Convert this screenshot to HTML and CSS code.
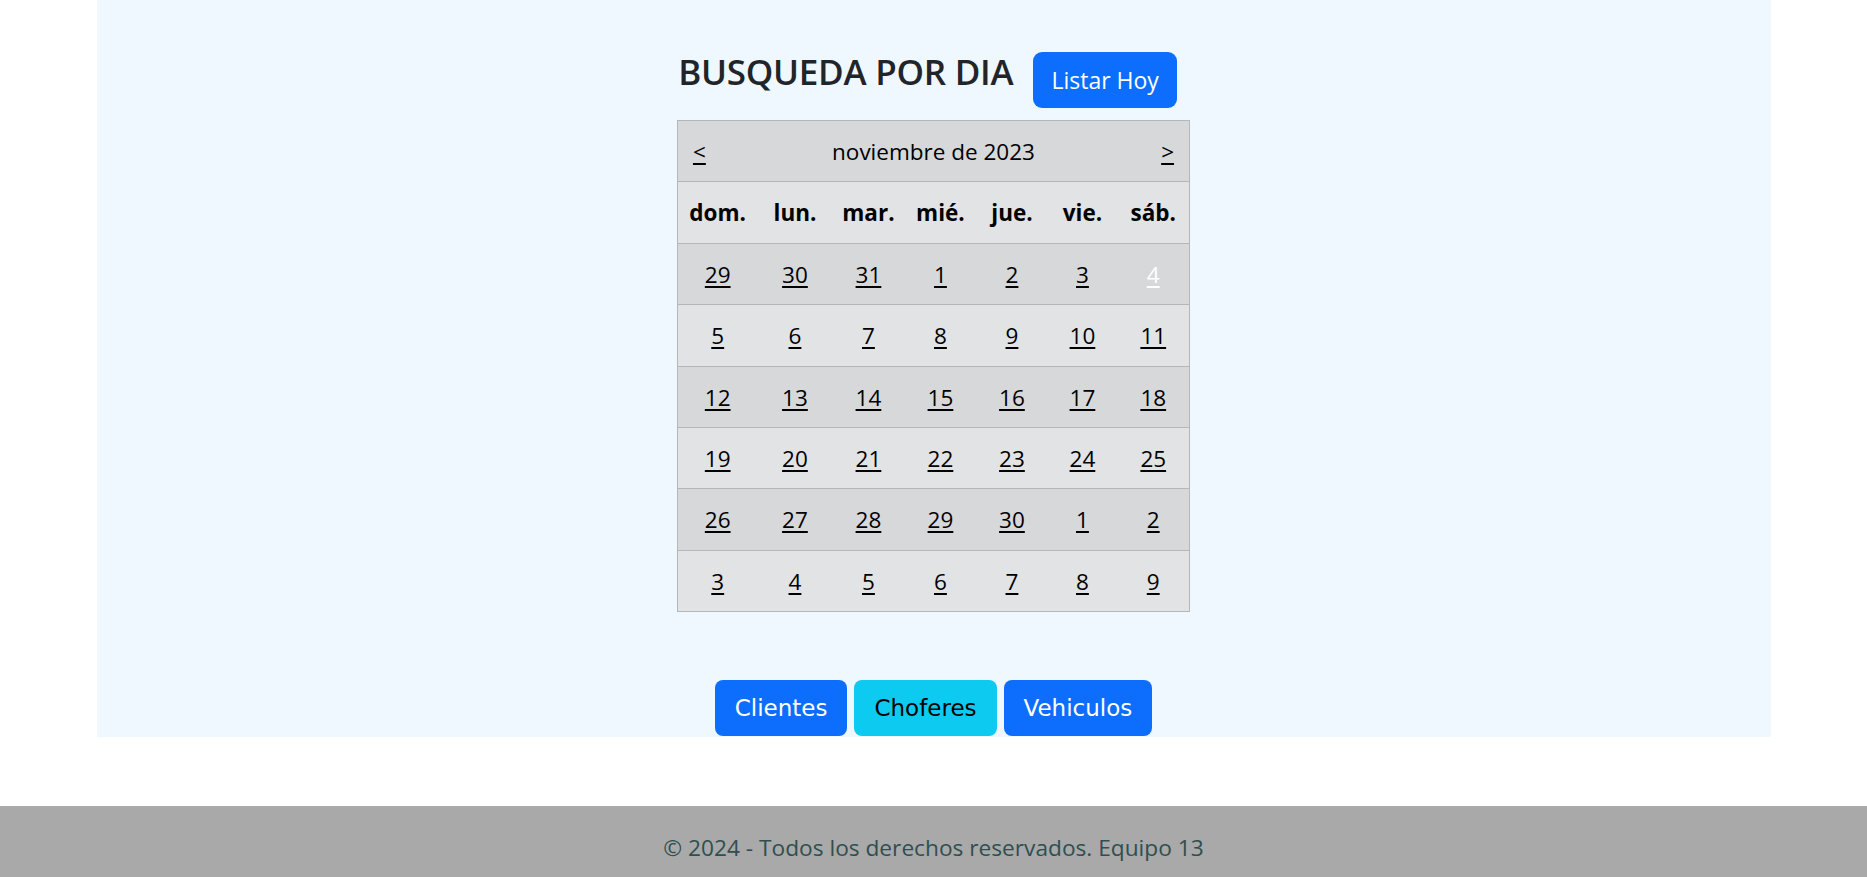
FILE: index.html
```html
<!DOCTYPE html>
<html lang="es">
<head>
<meta charset="utf-8">
<title>Busqueda por dia</title>
<link rel="stylesheet" href="styles.css">
</head>
<body>
<main class="container">
  <div class="title-row">
    <h2 class="title">BUSQUEDA POR DIA</h2>
    <a class="btn btn-lg btn-primary" href="#">Listar Hoy</a>
  </div>
  <table class="calendar">
    <colgroup>
      <col class="c1"><col class="c2"><col class="c3"><col class="c4"><col class="c5"><col class="c6"><col class="c7">
    </colgroup>
    <tr class="month-row">
      <td colspan="7">
        <div class="month-bar">
          <a href="#">&lt;</a>
          <span>noviembre de 2023</span>
          <a href="#">&gt;</a>
        </div>
      </td>
    </tr>
    <tr class="names">
      <th>dom.</th><th>lun.</th><th>mar.</th><th>mié.</th><th>jue.</th><th>vie.</th><th>sáb.</th>
    </tr>
    <tr><td><a href="#">29</a></td><td><a href="#">30</a></td><td><a href="#">31</a></td><td><a href="#">1</a></td><td><a href="#">2</a></td><td><a href="#">3</a></td><td><a class="today" href="#">4</a></td></tr>
    <tr><td><a href="#">5</a></td><td><a href="#">6</a></td><td><a href="#">7</a></td><td><a href="#">8</a></td><td><a href="#">9</a></td><td><a href="#">10</a></td><td><a href="#">11</a></td></tr>
    <tr><td><a href="#">12</a></td><td><a href="#">13</a></td><td><a href="#">14</a></td><td><a href="#">15</a></td><td><a href="#">16</a></td><td><a href="#">17</a></td><td><a href="#">18</a></td></tr>
    <tr><td><a href="#">19</a></td><td><a href="#">20</a></td><td><a href="#">21</a></td><td><a href="#">22</a></td><td><a href="#">23</a></td><td><a href="#">24</a></td><td><a href="#">25</a></td></tr>
    <tr><td><a href="#">26</a></td><td><a href="#">27</a></td><td><a href="#">28</a></td><td><a href="#">29</a></td><td><a href="#">30</a></td><td><a href="#">1</a></td><td><a href="#">2</a></td></tr>
    <tr><td><a href="#">3</a></td><td><a href="#">4</a></td><td><a href="#">5</a></td><td><a href="#">6</a></td><td><a href="#">7</a></td><td><a href="#">8</a></td><td><a href="#">9</a></td></tr>
  </table>
  <div class="actions">
    <a class="btn btn-nav btn-primary" href="#">Clientes</a>
    <a class="btn btn-nav btn-info" href="#">Choferes</a>
    <a class="btn btn-nav btn-primary" href="#">Vehiculos</a>
  </div>
</main>
<footer class="footer">© 2024 - Todos los derechos reservados. Equipo 13</footer>
</body>
</html>
```
FILE: styles.css
```css
html, body {
  margin: 0;
  padding: 0;
  height: 100%;
  overflow: hidden;
}
body {
  background: #ffffff;
  font-family: "Open Sans", "Noto Sans", sans-serif;
  color: #212529;
}
.container {
  width: 1674px;
  margin: 0 auto;
  background: #eff7ff;
  padding-top: 52px;
  display: flex;
  flex-direction: column;
  align-items: center;
  box-sizing: border-box;
  height: 737px;
}
.title-row {
  display: flex;
  align-items: flex-start;
  gap: 20px;
  margin-left: -12px;
}
.title {
  margin: 0;
  font-size: 35px;
  font-weight: 600;
  line-height: 40px;
  letter-spacing: -0.25px;
  color: #212529;
}
.btn {
  display: inline-flex;
  align-items: center;
  justify-content: center;
  box-sizing: border-box;
  text-decoration: none;
  border: 1px solid transparent;
}
.btn-lg {
  height: 56px;
  padding: 0 17px;
  font-size: 23px;
  border-radius: 9px;
}
.btn-primary {
  background: #0d6efd;
  color: #ffffff;
}
.btn-info {
  background: #0dcaf0;
  color: #000000;
}
.calendar {
  margin-top: 12px;
  width: 512px;
  table-layout: fixed;
  border-collapse: collapse;
  border: 1px solid #b5b6b7;
  font-size: 22.5px;
  color: #000;
}
.calendar .c1 { width: 80px; }
.calendar .c2 { width: 75px; }
.calendar .c3 { width: 72px; }
.calendar .c4 { width: 72px; }
.calendar .c5 { width: 71px; }
.calendar .c6 { width: 70px; }
.calendar .c7 { width: 72px; }
.calendar tr {
  background: #e2e3e5;
}
.calendar tr:nth-child(odd) {
  background: #d7d8da;
}
.calendar td, .calendar th {
  border-top: 1px solid #b5b6b7;
  padding: 13px 0 11.4px;
  line-height: 36px;
  text-align: center;
}
.calendar th {
  font-weight: 700;
}
.calendar a {
  color: #000;
  text-decoration: underline;
  text-underline-offset: 3px;
}
.calendar a.today {
  color: #ffffff;
}
.month-row td {
  padding: 13px 15px 11.4px;
}
.month-bar {
  display: flex;
  justify-content: space-between;
  align-items: center;
}
.actions {
  margin-top: 68px;
  display: flex;
  gap: 7px;
}
.btn-nav {
  height: 56px;
  padding: 0 19px;
  font-size: 23px;
  border-radius: 8px;
  font-family: "DejaVu Sans", sans-serif;
  font-weight: 400;
}
.footer {
  margin-top: 69px;
  height: 71px;
  background: #a9a9a9;
  color: #2f4f4f;
  text-align: center;
  font-size: 22.7px;
  line-height: 36px;
  padding-top: 24px;
  box-sizing: border-box;
}
```
